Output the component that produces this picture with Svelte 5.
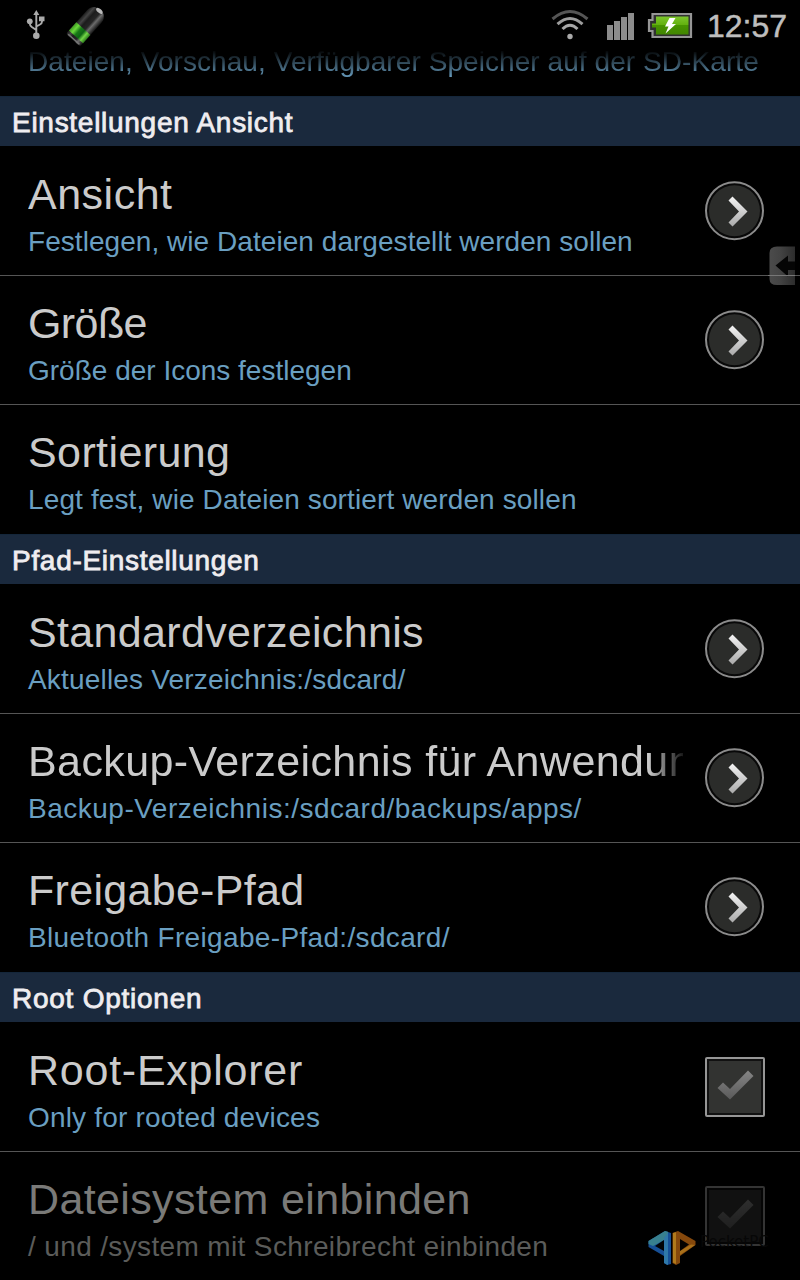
<script>
  const groups = [
    {
      title: 'Einstellungen Ansicht', ls: 0.72,
      items: [
        { title: 'Ansicht', sub: 'Festlegen, wie Dateien dargestellt werden sollen', kind: 'arrow', tls: 0.5, sls: 0.05 },
        { title: 'Größe', sub: 'Größe der Icons festlegen', kind: 'arrow', tls: -0.6, sls: 0 },
        { title: 'Sortierung', sub: 'Legt fest, wie Dateien sortiert werden sollen', kind: 'none', tls: 0.4, sls: 0.12 }
      ]
    },
    {
      title: 'Pfad-Einstellungen', ls: 0.7,
      items: [
        { title: 'Standardverzeichnis', sub: 'Aktuelles Verzeichnis:/sdcard/', kind: 'arrow', tls: 0.33, sls: 0.18 },
        { title: 'Backup-Verzeichnis für Anwendungen', sub: 'Backup-Verzeichnis:/sdcard/backups/apps/', kind: 'arrow', tls: 0.4, sls: 0.5, fade: true },
        { title: 'Freigabe-Pfad', sub: 'Bluetooth Freigabe-Pfad:/sdcard/', kind: 'arrow', tls: 0.3, sls: 0.34 }
      ]
    },
    {
      title: 'Root Optionen', ls: 0.75,
      items: [
        { title: 'Root-Explorer', sub: 'Only for rooted devices', kind: 'check', tls: 0.75, sls: 0.18 },
        { title: 'Dateisystem einbinden', sub: '/ und /system mit Schreibrecht einbinden', kind: 'check', tls: 0.37, sls: 0.36, disabled: true }
      ]
    }
  ];
</script>

<div class="screen">
  <header class="status">
    <svg class="usb" width="20" height="32" viewBox="0 0 20 32">
      <g fill="none" stroke="#aaa" stroke-width="1.9">
        <path d="M10.300 4V27M3.800 12v2.500q0 2 2 3.500L10.300 21M16 10v2.500q0 2-2 3L10.300 17.500" />
      </g>
      <path d="M10.300 1l3 5h-6zM13 7.500h5.500v4.800H13z" fill="#aaa" />
      <circle cx="3.800" cy="12.300" r="2.900" fill="#aaa" />
      <circle cx="10.300" cy="26.800" r="3.300" fill="#aaa" />
    </svg>
    <svg class="cell" width="46" height="46" viewBox="0 0 46 46">
      <defs>
        <linearGradient id="tube" x1="0" x2="1" y1="0" y2="0">
          <stop offset="0" stop-color="#1c1c1c" /><stop offset=".18" stop-color="#444" />
          <stop offset=".35" stop-color="#1c1c1c" /><stop offset=".6" stop-color="#262626" />
          <stop offset=".74" stop-color="#6c6c6c" /><stop offset="1" stop-color="#141414" />
        </linearGradient>
        <linearGradient id="juice" x1="0" x2="1" y1="0" y2="0">
          <stop offset="0" stop-color="#3f9a22" /><stop offset=".2" stop-color="#6cd83c" />
          <stop offset=".4" stop-color="#187a16" /><stop offset=".62" stop-color="#0d6414" />
          <stop offset=".8" stop-color="#74d848" /><stop offset="1" stop-color="#2a7a1a" />
        </linearGradient>
      </defs>
      <g transform="rotate(42 23 23)">
        <path d="M18.500 3h10q4.500 3 4.500 8v30q0 2-3 2H17q-3 0-3-2V11q0-5 4.500-8z" fill="url(#tube)" />
        <ellipse cx="23.500" cy="3.500" rx="4" ry="2" fill="#b8b8b8" />
        <path d="M14 27.500h19V38.500H14z" fill="url(#juice)" />
        <path d="M16 41.700h15" fill="none" stroke="#777" stroke-width="1.300" />
      </g>
    </svg>
    <span class="grow"></span>
    <svg class="wifi" width="40" height="34" viewBox="0 0 40 34">
      <g fill="none" stroke-width="3">
        <path d="M2.500 11Q20-4 37.500 11" stroke="#555" />
        <path d="M7.500 16.200Q20 4.800 32.500 16.200" stroke="#9c9c9c" />
        <path d="M12.500 21Q20 13.500 27.500 21" stroke="#a8a8a8" />
      </g>
      <circle cx="20" cy="28.500" r="2.700" fill="#aaa" />
    </svg>
    <svg class="bars" width="28" height="28" viewBox="0 0 28 28">
      <path d="M0 12h6v15H0zM7 8h6v19H7zM14 4h6v23h-6zM21 0h6v27h-6z" fill="#8c8c8c" />
    </svg>
    <svg class="batt" width="46" height="28" viewBox="0 0 46 28">
      <defs>
        <linearGradient id="green" x1="0" x2="0" y1="0" y2="1">
          <stop offset="0" stop-color="#7cc62c" /><stop offset=".48" stop-color="#62b00e" />
          <stop offset=".5" stop-color="#479400" /><stop offset="1" stop-color="#418500" />
        </linearGradient>
      </defs>
      <path d="M5.500 2H44V25H5.500V19H2V8H5.500z" fill="#303030" stroke="#969696" stroke-width="2.200" />
      <path d="M9 4.500H41.500V22.500H9V15.500H5V11.500H9z" fill="url(#green)" />
      <path d="M22.500 6h6l-3.500 6H29L18.500 21.500l3-7H18z" fill="#fff" />
    </svg>
    <span class="clock">12:57</span>
  </header>

  <div class="partial"><span>Dateien, Vorschau, Verfügbarer Speicher auf der SD-Karte</span></div>

  {#each groups as group}
    <section>
      <h2 style:letter-spacing="{group.ls}px">{group.title}</h2>
      {#each group.items as item}
        <div class="row" class:disabled={item.disabled}>
          <div class="text">
            <div class="title" class:fade={item.fade} style:letter-spacing="{item.tls}px">{item.title}</div>
            <div class="sub" style:letter-spacing="{item.sls}px">{item.sub}</div>
          </div>
          {#if item.kind === 'arrow'}
            <svg class="widget" width="60" height="60" viewBox="0 0 60 60">
              <defs>
                <linearGradient id="chev" x1="0" x2="0" y1="0" y2="1">
                  <stop offset="0" stop-color="#f4f4f4" /><stop offset="1" stop-color="#aaa" />
                </linearGradient>
              </defs>
              <circle cx="29.500" cy="29.700" r="28.500" fill="#080808" stroke="#8b8b8b" stroke-width="2" />
              <circle cx="29.500" cy="29.700" r="25.500" fill="#2b2c2a" />
              <path d="M27.500 15.500L42.500 30.500 27.500 45.500 23.500 41.500 34 30.500 23.500 19.500z" fill="url(#chev)" />
            </svg>
          {:else if item.kind === 'check'}
            <svg class="widget" width="60" height="60" viewBox="0 0 60 60">
              <defs>
                <linearGradient id="tick" x1="0" x2="0" y1="0" y2="1">
                  <stop offset="0" stop-color="#858585" /><stop offset="1" stop-color="#5a5a5a" />
                </linearGradient>
              </defs>
              <rect x="1" y="1" width="58" height="58" rx="1" fill="#111" stroke="#969696" stroke-width="2" />
              <rect x="4" y="4" width="52" height="52" fill="#323331" />
              <path d="M12.500 31l5.500-5.500 7 6.500L43 13.500l5.500 5.500L25 42.500z" fill="url(#tick)" />
            </svg>
          {/if}
        </div>
      {/each}
    </section>
  {/each}

  <svg class="handle" width="27" height="42" viewBox="0 0 27 42">
    <defs>
      <linearGradient id="tab" x1="0" x2="1" y1="0" y2="0">
        <stop offset="0" stop-color="#4b4b4b" /><stop offset=".4" stop-color="#444" /><stop offset="1" stop-color="#2c2c2c" />
      </linearGradient>
    </defs>
    <path d="M27 1.500H9Q1.500 1.500 1.500 8v26q0 6 7.500 6h18z" fill="url(#tab)" />
    <path d="M7.500 20.500L20 10.500v6h7v8.500h-7v6.500z" fill="#050505" />
    <path d="M0 30.500h27" stroke="#777" />
  </svg>

  <div class="mark">
    <svg width="48" height="36" viewBox="0 0 48 36">
      <path d="M.5 11L17 1l6 2v31l-4 1-3-2V26L.5 17z" fill="#164f96" />
      <path d="M.5 11L17 1l3 .800V8L5 16l-4.500-2z" fill="#38808f" />
      <path d="M16 8l4-5v32l-4-2z" fill="#2f78a8" />
      <path d="M7 16l9-6V21z" fill="#020405" />
      <path d="M47.500 11L30 1l-5.500 2v30l3.500 2 4-2V26l15.500-11z" fill="#85480c" />
      <path d="M32 21l11-6.500 4 .5-15 10z" fill="#a8701a" />
      <path d="M25 3l3-.8V34l-3-1.500z" fill="#b07a1c" />
      <path d="M41 14.500l-9-5.500v12z" fill="#040200" />
    </svg>
    <span>PocketPC</span>
  </div>
</div>

<style>
  :global(body) { margin: 0; background: #000; }
  .screen {
    position: relative; width: 800px; height: 1280px; overflow: hidden; background: #000;
    font-family: "Liberation Sans", Arial, sans-serif; color: #cbcbcb;
  }
  .status { display: flex; height: 50px; box-sizing: border-box; align-items: flex-start; }
  .usb { margin: 9px 0 0 26px; }
  .cell { margin: 2px 0 0 17px; }
  .grow { flex: 1; }
  .wifi { margin: 8px 17px 0 0; }
  .bars { margin: 13px 12px 0 0; }
  .batt { margin: 12px 15px 0 0; }
  .clock { width: 93px; font-size: 32px; line-height: 52px; color: #bebebe; -webkit-text-stroke: .5px #bebebe; margin-left: -1px; }
  .partial { height: 46px; white-space: nowrap; padding-left: 28px; }
  .partial span {
    display: inline-block; margin-top: -4px; line-height: 32px; font-size: 28px;
    letter-spacing: .07px; color: #6a9fc1;
    -webkit-mask-image: linear-gradient(transparent 4px, #000 32px);
    mask-image: linear-gradient(transparent 4px, #000 32px);
  }
  h2 {
    margin: 0; height: 50px; box-sizing: border-box; padding: 1px 0 0 12px;
    background: #1a293d; border-top: 1px solid #14263a;
    font-size: 28px; line-height: 49px; font-weight: 400; color: #efedf0;
    -webkit-text-stroke: .8px #efedf0;
  }
  .row {
    display: flex; height: 129px; box-sizing: border-box; border-bottom: 1px solid #555;
    padding: 0 35px 0 28px; justify-content: space-between;
  }
  h2 + .row { height: 130px; padding-top: 1px; }
  .row:last-child { border-color: transparent; }
  .text { width: 655px; white-space: nowrap; }
  .title { font-size: 43px; line-height: 48px; margin-top: 23px; overflow: hidden; }
  .fade { -webkit-mask-image: linear-gradient(90deg, #000 620px, transparent 660px); mask-image: linear-gradient(90deg, #000 620px, transparent 660px); }
  .sub { font-size: 28px; line-height: 32px; margin-top: 8px; color: #6a9fc1; }
  .widget { margin-top: 34px; flex: none; }
  .disabled .title { color: #7a7a78; }
  .disabled .sub { color: #5b5c5a; }
  .disabled .widget { opacity: .35; }
  .handle { position: absolute; left: 768px; top: 245px; }
  .mark { position: absolute; left: 648px; top: 1230px; display: flex; align-items: flex-start; }
  .mark span { font-family: "DejaVu Sans", sans-serif; font-size: 15px; color: #070707; margin: 3px 0 0 4px; }
</style>
